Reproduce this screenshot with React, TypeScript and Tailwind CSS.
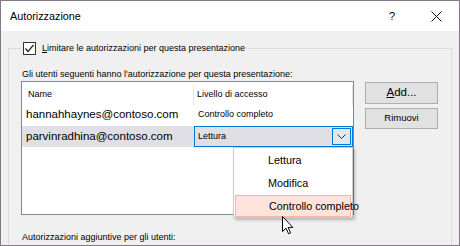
export default function App() {
  return (
    <div className="w-[460px] h-[246px] overflow-hidden border border-[#857787] bg-[#f0f0f0] font-['Segoe_UI','Liberation_Sans',Arial,sans-serif] text-black">
      {/* title bar */}
      <div className="h-[30px] bg-white flex items-center pl-[9px]">
        <span className="text-[10.8px]">Autorizzazione</span>
        <span className="ml-auto text-[11px] leading-none mr-[36px]">?</span>
        <svg width="11" height="11" viewBox="0 0 11 11" className="mr-[17px]">
          <path d="M0.5 0.5 L10.5 10.5 M10.5 0.5 L0.5 10.5" stroke="#111" strokeWidth="1" />
        </svg>
      </div>

      {/* group box */}
      <div className="mt-[17px] ml-[7px] w-[444px] h-[300px] border border-[#dcdcdc] pl-[12px]">
        <div className="-mt-[8px] w-fit h-[14px] px-[2px] bg-[#f0f0f0] flex items-center gap-[6px]">
          <div className="w-[13px] h-[13px] bg-white border border-[#333] flex items-center justify-center">
            <svg width="11" height="11" viewBox="0 0 11 11">
              <path d="M1.5 5.5 L4 8.5 L9.5 2" fill="none" stroke="#222" strokeWidth="1.2" />
            </svg>
          </div>
          <span className="text-[9px] leading-[11px]">
            <span className="underline underline-offset-1">L</span>imitare le autorizzazioni per questa presentazione
          </span>
        </div>

        <div className="mt-[14px] ml-[1px] text-[9px] leading-[11px]">
          Gli utenti seguenti hanno l'autorizzazione per questa presentazione:
        </div>

        <div className="mt-[1px] flex gap-[11px]">
          {/* list */}
          <div className="relative w-[333px] h-[134px] bg-white border border-[#828790]">
            <div className="h-[22px] flex items-center pt-[3px] text-[9px]">
              <div className="w-[171px] pl-[6px]">Name</div>
              <div className="w-[1px] h-[20px] bg-[#e5e5e5]" />
              <div className="w-[158px] pl-[3px]">Livello di accesso</div>
              <div className="w-[1px] h-[20px] bg-[#e5e5e5]" />
            </div>
            <div className="h-[22px] flex items-center">
              <div className="w-[172px] pl-[4px] text-[11.5px]">hannahhaynes@contoso.com</div>
              <div className="pl-[4px] text-[9px]">Controllo completo</div>
            </div>
            <div className="h-[21px] flex bg-[#dfdfe5]">
              <div className="w-[172px] pl-[4px] text-[11.5px] flex items-center">parvinradhina@contoso.com</div>
              <div className="w-[159px] border border-[#0078d7] flex items-center">
                <span className="pl-[3px] text-[9px] flex-1">Lettura</span>
                <div className="w-[19px] h-[17px] mr-[1px] border border-[#0078d7] bg-[#dde8f3] flex items-center justify-center">
                  <svg width="9" height="5" viewBox="0 0 9 5">
                    <path d="M0.5 0.5 L4.5 4.5 L8.5 0.5" fill="none" stroke="#333" strokeWidth="1" />
                  </svg>
                </div>
              </div>
            </div>

            {/* dropdown menu */}
            <div className="absolute left-[211px] top-[65px] w-[120px] bg-white border border-[#cccccc] pt-[1px] shadow-[2px_2px_3px_rgba(0,0,0,0.25)] text-[10.8px]">
              <div className="h-[23px] flex items-center pl-[34px]">Lettura</div>
              <div className="h-[23px] flex items-center pl-[34px]">Modifica</div>
              <div className="h-[22px] mx-[1px] flex items-center pl-[33px] bg-[#fde3da] border border-[#f4b7a2] whitespace-nowrap">
                Controllo completo
              </div>
            </div>

            {/* cursor */}
            <svg className="absolute left-[260px] top-[134px]" width="12" height="19" viewBox="0 0 12 19">
              <path
                d="M0.5 0.5 L0.5 15.5 L4 12.2 L6.6 17.8 L8.6 16.9 L6.1 11.4 L10.8 11.4 Z"
                fill="#fff"
                stroke="#000"
                strokeWidth="1"
                strokeLinejoin="round"
              />
            </svg>
          </div>

          {/* buttons */}
          <div className="mt-[1px] flex flex-col gap-[4px]">
            <div className="w-[73px] h-[22px] bg-[#e1e1e1] border border-[#adadad] flex items-center justify-center text-[11.5px]">
              <span>
                <span className="underline underline-offset-1">A</span>dd...
              </span>
            </div>
            <div className="w-[73px] h-[21px] bg-[#e1e1e1] border border-[#adadad] flex items-center justify-center text-[9.5px]">
              Rimuovi
            </div>
          </div>
        </div>

        <div className="mt-[17px] ml-[1px] text-[9px] leading-[11px]">Autorizzazioni aggiuntive per gli utenti:</div>
      </div>
    </div>
  );
}
